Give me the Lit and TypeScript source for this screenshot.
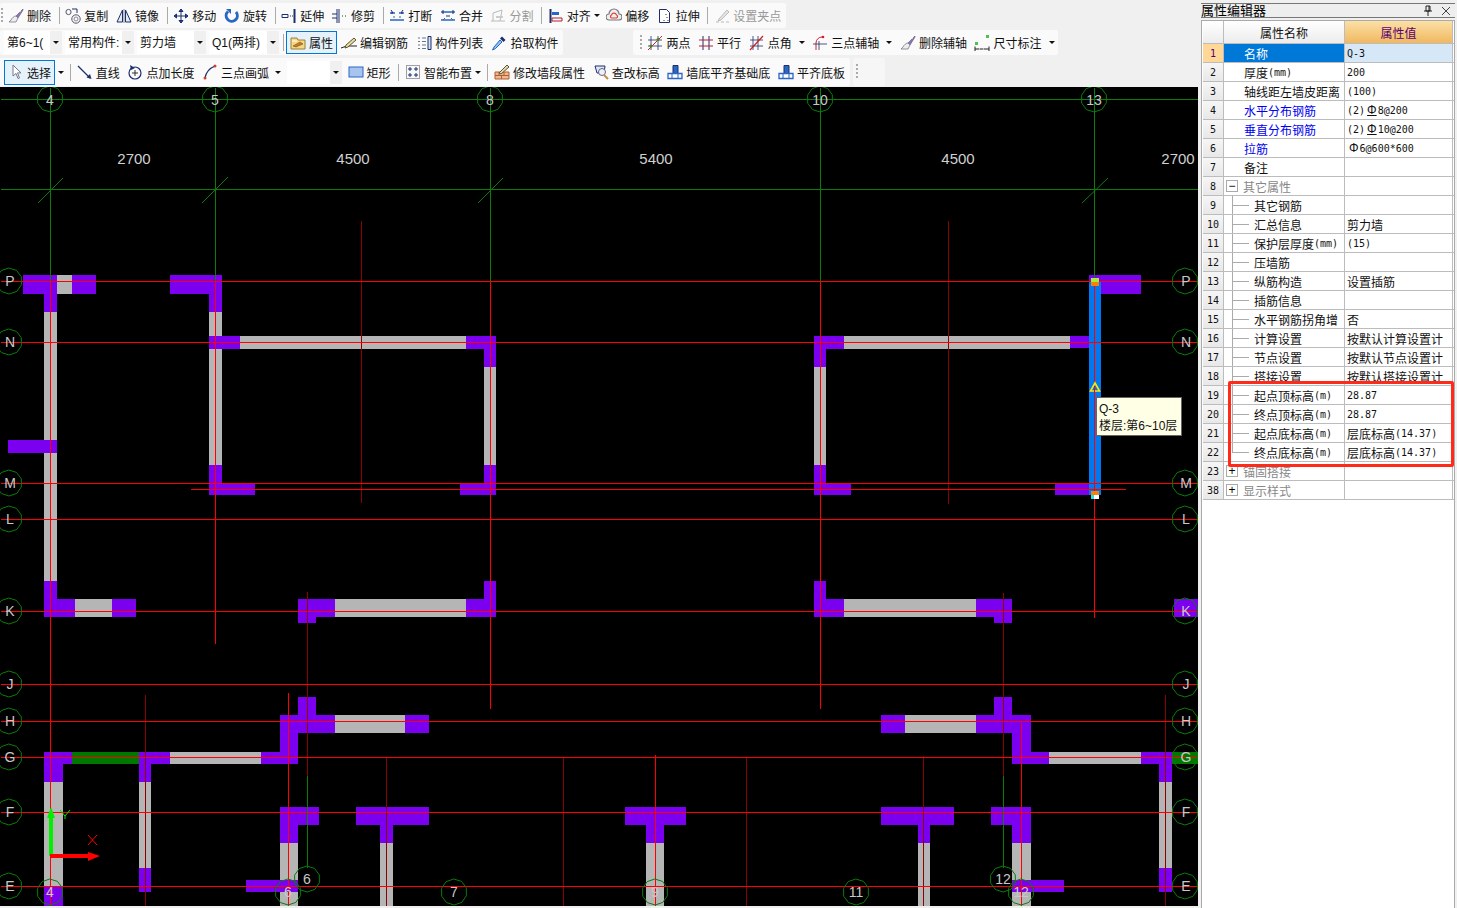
import { LitElement, html, css, svg } from "lit";
import { customElement } from "lit/decorators.js";

type Box = [number, number, number, number];
type Seg = [number, number, number, number, string];

const RED = "#ff0000";
const DARK = "#8c0000";
const AXIS = "#0a7d0a";

const PURPLE: Box[] = [
  [23, 275, 96, 294], [44, 294, 57, 312], [8, 440, 57, 453], [44, 581, 57, 599], [44, 599, 75, 617], [112, 599, 136, 617],
  [170, 275, 222, 294], [209, 294, 222, 312], [209, 336, 240, 349], [466, 336, 496, 349], [484, 349, 496, 367],
  [484, 465, 496, 484], [460, 484, 496, 495], [209, 465, 222, 484], [209, 484, 255, 495],
  [298, 599, 335, 617], [298, 617, 316, 623], [466, 599, 496, 617], [484, 581, 496, 599],
  [298, 697, 316, 715], [280, 715, 335, 733], [405, 715, 429, 733], [280, 733, 298, 752],
  [44, 752, 72, 764], [139, 752, 170, 764], [261, 752, 298, 764], [44, 764, 63, 782], [44, 886, 63, 906],
  [139, 764, 151, 782], [139, 868, 151, 892],
  [280, 807, 319, 825], [280, 825, 298, 843], [246, 880, 298, 892],
  [356, 807, 429, 825], [380, 825, 393, 843], [625, 807, 686, 825], [646, 825, 664, 843],
  [814, 599, 844, 617], [814, 581, 826, 599], [976, 599, 1012, 617], [994, 617, 1012, 623],
  [881, 715, 905, 733], [976, 715, 1031, 733], [994, 697, 1012, 715], [1012, 733, 1031, 752],
  [1012, 752, 1049, 764], [1141, 752, 1172, 764], [1159, 764, 1172, 782], [1159, 868, 1172, 892],
  [1174, 599, 1198, 617], [881, 807, 954, 825], [918, 825, 930, 843], [991, 807, 1031, 825], [1012, 825, 1031, 843],
  [1012, 880, 1064, 892],
  [814, 336, 844, 349], [814, 349, 826, 367], [814, 465, 826, 484], [814, 484, 851, 495],
  [1070, 336, 1090, 348], [1055, 484, 1090, 495], [1089, 275, 1141, 294],
];

const GRAY: Box[] = [
  [44, 312, 57, 581], [75, 599, 112, 617], [209, 312, 222, 465], [240, 336, 466, 349],
  [484, 367, 496, 465], [335, 599, 466, 617], [335, 715, 405, 733], [170, 752, 261, 764], [44, 782, 63, 886],
  [139, 782, 151, 868], [280, 843, 298, 906], [380, 843, 393, 906], [646, 843, 664, 906],
  [844, 599, 976, 617], [905, 715, 976, 733], [1049, 752, 1141, 764], [1159, 782, 1172, 868],
  [918, 843, 930, 906], [1012, 843, 1031, 906], [814, 367, 826, 465], [844, 336, 1070, 349],
];

// the grey patch in the top left wall sits on the purple run
const PATCH: Box[] = [[57, 275, 72, 294]];

const GREEN: Box[] = [[72, 752, 139, 764], [1172, 752, 1198, 764]];

const ROWS = [281, 342, 483, 519, 611, 684, 721, 757, 812, 886];

const LINES: Seg[] = [
  [0, 99, 1198, 99, AXIS], [0, 189, 1198, 189, AXIS],
  ...[50, 215, 490, 820, 1094].map((x) => [x, 87, x, 281, AXIS] as Seg),
  [38, 203, 63, 178, AXIS], [202, 203, 228, 177, AXIS], [478, 203, 503, 178, AXIS], [1082, 203, 1108, 178, AXIS],
  [307, 775, 307, 867, AXIS], [1003, 775, 1003, 867, AXIS],
  [361, 220, 361, 502, DARK], [948, 220, 948, 503, DARK], [307, 591, 307, 775, DARK], [1003, 592, 1003, 775, DARK],
  [145, 694, 145, 906, DARK], [386, 757, 386, 906, DARK], [563, 757, 563, 906, DARK], [746, 757, 746, 906, DARK],
  [923, 755, 923, 906, DARK], [1165, 694, 1165, 906, DARK],
  ...ROWS.map((y) => [0, y, 1198, y, RED] as Seg),
  [190, 489, 1125, 489, RED],
  [50, 281, 50, 906, RED], [215, 281, 215, 643, RED], [490, 281, 490, 708, RED], [820, 281, 820, 708, RED],
  [1094, 281, 1094, 617, RED], [288, 692, 288, 906, RED], [655, 754, 655, 906, RED], [1021, 722, 1021, 906, RED],
];

const LABELS: [number, number, string][] = [
  [50, 99, "4"], [215, 99, "5"], [490, 99, "8"], [820, 99, "10"], [1094, 99, "13"],
  ...["P", "N", "M", "L", "K", "J", "H", "G", "F", "E"].flatMap((t, i) => [
    [9, ROWS[i], t] as [number, number, string],
    [1185, ROWS[i], t] as [number, number, string],
  ]),
  [50, 892, "4"], [288, 892, "6"], [307, 879, "6"], [454, 892, "7"], [655, 892, "9"], [856, 892, "11"],
  [1003, 879, "12"], [1021, 892, "12"],
];

const SPANS: [number, string][] = [[134, "2700"], [353, "4500"], [656, "5400"], [958, "4500"], [1178, "2700"]];

const ring = (cx: number, cy: number) => {
  const pts: string[] = [];
  for (let i = 0; i < 10; i++) {
    const a = (Math.PI * 2 * i) / 10 + 0.3;
    pts.push(`${(cx + 13 * Math.cos(a)).toFixed(1)},${(cy + 13 * Math.sin(a)).toFixed(1)}`);
  }
  return pts.join(" ");
};

const rects = (list: Box[], fill: string) =>
  list.map(([a, b, c, d]) => svg`<rect x=${a} y=${b} width=${c - a} height=${d - b} fill=${fill}></rect>`);

@customElement("cad-canvas")
class CadCanvas extends LitElement {
  static styles = css`
    :host { display: block; position: relative; width: 1198px; height: 819px; background: #000; overflow: hidden; }
    svg { display: block; }
    .lab { font: 14px "Liberation Sans", sans-serif; fill: #c8c8c8; text-anchor: middle; dominant-baseline: central; }
    .span { font: 15px "Liberation Sans", sans-serif; fill: #d0d0d0; text-anchor: middle; dominant-baseline: central; }
    .tip {
      position: absolute; left: 1096px; top: 310px; width: 86px; height: 39px; box-sizing: border-box;
      background: #ffffe6; border: 1px solid #666; padding: 3px 0 0 2px; color: #111;
      font: 12px/17px "Liberation Sans", "Noto Sans CJK SC", sans-serif; white-space: nowrap;
    }
  `;

  render() {
    return html`
      <svg width="1198" height="819" viewBox="0 87 1198 819" shape-rendering="crispEdges">
        ${rects(GRAY, "#b5b5b5")} ${rects(PURPLE, "#7b00f0")} ${rects(PATCH, "#b5b5b5")} ${rects(GREEN, "#007800")}
        <rect x="1089" y="282" width="12" height="213" fill="#0078f0"></rect>
        ${LINES.map(([a, b, c, d, col]) => {
          const diag = a !== c && b !== d;
          const o = diag ? 0 : 0.5;
          return svg`<line x1=${a + o} y1=${b + o} x2=${c + o} y2=${d + o} stroke=${col} stroke-width="1" shape-rendering=${diag ? "auto" : "crispEdges"}></line>`;
        })}
        <rect x="1091" y="278" width="8" height="4" fill="#a0f040"></rect>
        <rect x="1091" y="282" width="8" height="4" fill="#ff8000"></rect>
        <rect x="1091" y="491" width="8" height="4" fill="#ff8000"></rect>
        <rect x="1091" y="495" width="8" height="4" fill="#fff"></rect>
        <rect x="1091" y="495" width="3" height="4" fill="#20e0f0"></rect>
        <polygon points="1095,383 1090.5,391 1099.5,391" fill="#0078f0" stroke="#ffe600" stroke-width="1.6" shape-rendering="auto"></polygon>
        <line x1="1094.5" y1="386" x2="1094.5" y2="392" stroke="#ff0000"></line>
        ${LABELS.map(([x, y]) => svg`<polygon points=${ring(x, y)} fill="none" stroke=${AXIS} shape-rendering="auto"></polygon>`)}
        <g shape-rendering="auto">
          ${LABELS.map(([x, y, t]) => {
            // side letters sit a pixel right of the ring centre, top numbers a pixel low
            const tx = x === 9 || x === 1185 ? x + 1 : x;
            const ty = y === 99 ? y + 1 : y;
            return svg`<text class="lab" x=${tx} y=${ty}>${t}</text>`;
          })}
          ${SPANS.map(([x, t]) => svg`<text class="span" x=${x} y="158">${t}</text>`)}
          <polygon points="49,856 49,818 47,818 51,807 55,818 53,818 53,856" fill="#00f000"></polygon>
          <polygon points="50,854 88,854 88,852 100,856 88,861 88,858 50,858" fill="#ff0000"></polygon>
          <path d="M60 810l5 6 5-6M65 816v3" fill="none" stroke="#00f000"></path>
          <path d="M88 835l9 10M97 835l-9 10" fill="none" stroke="#ff0000"></path>
        </g>
      </svg>
      <div class="tip">Q-3<br />楼层:第6~10层</div>
    `;
  }
}

const NAVY = "#1c2f6b";
const BLUE = "#2a66c4";
const ICONS: Record<string, unknown> = {
  brush: svg`<path d="M15 1L8 8l2 2 5-8z" fill="#8a78b8" stroke="#5a4a80" stroke-width=".6"/><path d="M8 8c-2 0-4 2-5 4l-2 2h7l2-4z" fill="#eee" stroke="#667" stroke-width=".7"/><path d="M12 3l1 1" stroke="#e8c040"/>`,
  copy: svg`<circle cx="3.5" cy="4" r="2.6" fill="none" stroke="#556"/><circle cx="11" cy="11" r="4.2" fill="none" stroke="#556"/><circle cx="11" cy="11" r="2" fill="none" stroke="#889"/><path d="M7 1h5v4" fill="none" stroke=${NAVY}/>`,
  mirror: svg`<path d="M6.5 2L1 14h5.500zM9.500 2L15 14H9.500z" fill="#e4ecf4" stroke=${NAVY}/><path d="M8 1v14" stroke="#888"/>`,
  move: svg`<path d="M8 1v14M1 8h14M8 1L6 3.500h4zM8 15l-2-2.500h4zM1 8l2.500-2v4zM15 8l-2.500-2v4z" fill=${BLUE} stroke=${NAVY}/>`,
  rotate: svg`<path d="M4 3.500A5.600 5.600 0 1 0 12 4" fill="none" stroke=${BLUE} stroke-width="3"/><path d="M2 1h5v5z" fill=${BLUE}/>`,
  extend: svg`<path d="M1 6.500h6v3H1z" fill="none" stroke=${NAVY}/><path d="M9 8h1M11 8h1" stroke="#333"/><path d="M13.500 1v14" stroke=${NAVY} stroke-width="2"/>`,
  trim: svg`<path d="M5 1v14M7 1v14" stroke=${NAVY}/><path d="M0 6h5M0 10h5" stroke=${NAVY}/><path d="M10 8h1M13 8h1" stroke="#333"/>`,
  breakup: svg`<path d="M1 5h5M10 5h5M1 12h14" stroke=${BLUE} stroke-width="1.600"/><path d="M2 2l2 3-2 0M14 2l-2 3 2 0" stroke=${NAVY} fill="none"/><path d="M4 9h2M10 9h2" stroke="#567"/>`,
  merge: svg`<path d="M1 4h14M1 12h14" stroke=${BLUE} stroke-width="1.600"/><path d="M3 2v4M13 2v4M6 8h4" stroke=${NAVY}/><path d="M5 10l-2 2M11 10l2 2" stroke="#567"/>`,
  split: svg`<path d="M1 13h14M3 5l9-3-2 11M3 5v8" fill="none" stroke="#bbb"/><path d="M6 9h7" stroke="#ccc" stroke-width="2"/>`,
  align: svg`<path d="M2.500 1v14" stroke=${NAVY} stroke-width="2"/><path d="M4 4h7v3H4z" fill=${BLUE}/><path d="M4 10h10v3H4z" fill="none" stroke="#b02030"/>`,
  offset: svg`<path d="M3 12a3 3 0 0 1 0-6 5 5 0 0 1 10 0 3 3 0 0 1 0 6z" fill="#eee" stroke="#778" stroke-width="1.200"/><path d="M5.500 10a1.600 1.600 0 0 1 0-3 2.600 2.600 0 0 1 5 0 1.600 1.600 0 0 1 0 3z" fill="none" stroke="#e04030" stroke-width="1.200"/>`,
  stretch: svg`<path d="M2.500 1.500h7l3 3v10h-10z" fill="#fff" stroke=${NAVY}/><path d="M9 6v1M10 9v1M11 12v1M7 12v1" stroke="#333"/>`,
  grip: svg`<path d="M2 14h3M7 14h3M12 14h3" stroke="#bbb"/><path d="M5 11l8-9 2 2-8 8-3 1z" fill="#e4e4e4" stroke="#bbb"/>`,
  folder: svg`<path d="M1 3h6l1 2h7v9H1z" fill="#f6d78a" stroke="#a08030"/><path d="M3 11l7-4 3 2-7 3z" fill="#c08020" stroke="#704010" stroke-width=".5"/><path d="M2 6h5" stroke="#fff"/>`,
  pen: svg`<path d="M0 13c3-1 5-2 8-2h8" fill="none" stroke="#222"/><path d="M5 10l8-7 2 2-8 7-3 1z" fill="#f0d890" stroke="#554"/>`,
  list: svg`<path d="M12 1.500h3v13h-3z" fill="#cfe0f4" stroke=${NAVY}/><path d="M2 3h2M6 3h4M2 6.500h2M6 6.500h4M2 10h2M6 10h4M2 13.500h2M6 13.500h4" stroke="#678"/>`,
  dropper: svg`<path d="M11 1.500l3.500 3.500-2 2-3.500-3.500z" fill=${NAVY}/><path d="M9 5l2 2-6.500 6.500-3 1.500 1.500-3z" fill="#8fc0f0" stroke=${BLUE}/>`,
  two: svg`<path d="M4 1v14M11 1v14M1 5h14M1 11h14" stroke=${NAVY} stroke-width=".8"/><path d="M1 15L15 1" stroke="#d02020"/><circle cx="4" cy="11" r="1.500" fill="#4a8020"/><circle cx="11" cy="4.500" r="1.500" fill="#4a8020"/>`,
  parallel: svg`<path d="M5 1v14M11 1v14" stroke=${NAVY}/><path d="M1 5h14M1 11h14" stroke="#c02030"/>`,
  angle: svg`<path d="M4 1v14M9 1v14M1 5h13M1 11h13" stroke=${NAVY} stroke-width=".8"/><path d="M1 15L14 1" stroke="#d02020" stroke-width="1.200"/>`,
  arcaxis: svg`<path d="M4 15V8a6 6 0 0 1 6-6" fill="none" stroke="#d02030"/><path d="M1 9h14M7 6v9" stroke=${NAVY} stroke-width=".8"/><circle cx="11" cy="2" r="1.300" fill="#d02030"/>`,
  dim: svg`<path d="M1 14h14M1 11.500v5M15 11.500v5" stroke="#222"/><rect x="1" y="7" width="3" height="3" fill="#50c050"/><rect x="12" y="0" width="3" height="3" fill="#50c050"/><path d="M5 14h1M9 14h1" stroke="#fff"/>`,
  cursor: svg`<path d="M4 1v11l3-2.500 2 5 1.500-.6-2-5H12z" fill="#fff" stroke="#778"/>`,
  line: svg`<path d="M1 2l12 12" stroke=${NAVY} stroke-width="1.300"/><path d="M14.500 15l-5-1.500 3.500-3.500z" fill=${NAVY}/>`,
  arclen: svg`<circle cx="8" cy="9" r="6" fill="none" stroke=${NAVY} stroke-width="1.200"/><path d="M8 6v6M5 9h6" stroke="#333"/><path d="M3 1l1 5 4-2z" fill=${NAVY}/>`,
  arc: svg`<path d="M3 14C4 8 8 4 13 2" fill="none" stroke=${NAVY} stroke-width="1.300"/><circle cx="3" cy="14" r="1.500" fill="#d04030"/><circle cx="13" cy="2" r="1.500" fill="#d04030"/>`,
  rect: svg`<rect x="1" y="3" width="14" height="10" fill="#a8c4ee" stroke=${BLUE}/>`,
  smart: svg`<rect x="1.500" y="1.500" width="13" height="13" fill="#f8f8f8" stroke="#445" stroke-dasharray="1 1"/><path d="M5 3v4M3 5h4M11 3v4M9 5h4M5 9v4M3 11h4M11 9v4M9 11h4" stroke=${NAVY}/>`,
  brick: svg`<path d="M1 8h14v7H1z" fill="#f0b890" stroke="#b06030"/><path d="M1 11.500h14M5 8v3.500M10 8v3.500M7.500 11.500V15" stroke="#b06030"/><path d="M5 9l8-8 2 2-8 7z" fill="#e8d8a0" stroke="#554"/>`,
  search: svg`<path d="M2 2h10l-1 7H4z" fill="#dce8f4" stroke=${NAVY}/><circle cx="9" cy="8" r="3.500" fill="#eef" stroke="#667"/><path d="M11 11l4 4" stroke="#c09040" stroke-width="2"/>`,
  tower: svg`<path d="M6 1.500h5v8H6z" fill=${BLUE} stroke=${NAVY}/><path d="M1 9.500h14v5H1z" fill="#fff" stroke=${BLUE} stroke-width="1.300"/><path d="M5 9.500v5M11 9.500v5" stroke=${BLUE}/>`,
};

// caret: gap before the little arrow, differs per button in the reference
type Tool = { i?: string; t?: string; caret?: 0 | 3 | 4; active?: boolean };
type Item = Tool | "sep" | "grip" | { sel: string; w: number };

const ROW1: Item[] = [
  "grip",
  { i: "brush", t: "删除" }, "sep", { i: "copy", t: "复制" }, { i: "mirror", t: "镜像" }, "sep",
  { i: "move", t: "移动" }, { i: "rotate", t: "旋转" }, "sep", { i: "extend", t: "延伸" }, { i: "trim", t: "修剪" }, "sep",
  { i: "breakup", t: "打断" }, { i: "merge", t: "合并" }, { i: "split", t: "分割" }, "sep",
  { i: "align", t: "对齐", caret: 0 }, { i: "offset", t: "偏移" }, { i: "stretch", t: "拉伸" }, "sep",
  { i: "grip", t: "设置夹点" },
];
const ROW2A: Item[] = [
  { sel: "第6~1(", w: 46 }, { sel: "常用构件:", w: 57 }, { sel: "剪力墙", w: 57 }, { sel: "Q1(两排)", w: 58 }, "sep",
  { i: "folder", t: "属性", active: true }, { i: "pen", t: "编辑钢筋" }, { i: "list", t: "构件列表" }, { i: "dropper", t: "拾取构件" },
];
const ROW2B: Item[] = [
  "grip",
  { i: "two", t: "两点" }, { i: "parallel", t: "平行" }, { i: "angle", t: "点角", caret: 4 },
  { i: "arcaxis", t: "三点辅轴", caret: 4 }, { i: "brush", t: "删除辅轴" }, { i: "dim", t: "尺寸标注", caret: 4 },
];
const ROW3: Item[] = [
  { i: "cursor", t: "选择", active: true, caret: 3 }, "sep",
  { i: "line", t: "直线" }, { i: "arclen", t: "点加长度" }, { i: "arc", t: "三点画弧", caret: 3 },
  { sel: "", w: 43 }, { i: "rect", t: "矩形" }, "sep", { i: "smart", t: "智能布置", caret: 0 }, "sep",
  { i: "brick", t: "修改墙段属性" }, { i: "search", t: "查改标高" }, { i: "tower", t: "墙底平齐基础底" }, { i: "tower", t: "平齐底板" },
];

type Prop = { n: string; name: string; val?: unknown; kind?: "link" | "group" | "tree" | "last"; open?: boolean };

const latin = (s: string) =>
  s.split(/([\x00-\x7f]+)/).map((p, i) => (i % 2 ? html`<span class="lat">${p}</span>` : p));

const PROPS: Prop[] = [
  { n: "2", name: "厚度(mm)", val: "200" },
  { n: "3", name: "轴线距左墙皮距离", val: "(100)" },
  { n: "4", name: "水平分布钢筋", val: html`<span class="lat">(2)<u class="rb">Φ</u>8@200</span>`, kind: "link" },
  { n: "5", name: "垂直分布钢筋", val: html`<span class="lat">(2)<u class="rb">Φ</u>10@200</span>`, kind: "link" },
  { n: "6", name: "拉筋", val: html`<span class="lat"><span class="rb">Φ</span>6@600*600</span>`, kind: "link" },
  { n: "7", name: "备注" },
  { n: "8", name: "其它属性", kind: "group", open: true },
  { n: "9", name: "其它钢筋", kind: "tree" },
  { n: "10", name: "汇总信息", val: "剪力墙", kind: "tree" },
  { n: "11", name: "保护层厚度(mm)", val: "(15)", kind: "tree" },
  { n: "12", name: "压墙筋", kind: "tree" },
  { n: "13", name: "纵筋构造", val: "设置插筋", kind: "tree" },
  { n: "14", name: "插筋信息", kind: "tree" },
  { n: "15", name: "水平钢筋拐角增", val: "否", kind: "tree" },
  { n: "16", name: "计算设置", val: "按默认计算设置计", kind: "tree" },
  { n: "17", name: "节点设置", val: "按默认节点设置计", kind: "tree" },
  { n: "18", name: "搭接设置", val: "按默认搭接设置计", kind: "tree" },
  { n: "19", name: "起点顶标高(m)", val: "28.87", kind: "tree" },
  { n: "20", name: "终点顶标高(m)", val: "28.87", kind: "tree" },
  { n: "21", name: "起点底标高(m)", val: "层底标高(14.37)", kind: "tree" },
  { n: "22", name: "终点底标高(m)", val: "层底标高(14.37)", kind: "last" },
  { n: "23", name: "锚固搭接", kind: "group" },
  { n: "38", name: "显示样式", kind: "group" },
];

@customElement("prop-panel")
class PropPanel extends LitElement {
  static styles = css`
    :host {
      display: block; position: relative; width: 259px; height: 908px; background: #f0f0f0; box-sizing: border-box;
      padding: 3px 2px 0 3px; font: 12px "Liberation Sans", "Noto Sans CJK SC", sans-serif; color: #111;
    }
    .title {
      height: 15px; box-sizing: border-box; border: 1px solid #777; border-width: 1px 0; background: #eee;
      display: flex; align-items: center; font-size: 13px; line-height: 13px; color: #000;
    }
    .title span { flex: 1; }
    .title svg { margin-right: 8px; display: block; }
    .title svg:last-child { margin-right: 4px; }
    .body { margin-top: 2px; height: 888px; box-sizing: border-box; background: #fff; border: 1px solid #aaa; border-bottom: 0; padding-left: 1px; }
    .row { display: grid; grid-template-columns: 21px 121px 108px; height: 19px; box-sizing: border-box; border-bottom: 1px solid #bcbcbc; }
    .row > div { border-right: 1px solid #bcbcbc; box-sizing: border-box; display: flex; align-items: center; white-space: nowrap; overflow: hidden; }
    .num { justify-content: center; background: linear-gradient(#f6f6f6, #e8e8e8); border-right-color: #ccc; }
    .lat { font: 10px "DejaVu Sans Mono", monospace; }
    .rb { font: 12px "Liberation Sans", sans-serif; margin: 0 1px 0 2px; }
    .head { height: 23px; }
    .head > div { justify-content: center; background: linear-gradient(#fff, #ececec); }
    .head .hv { background: linear-gradient(#fbe0a6, #f0b860); color: #5a0070; }
    .name { padding-left: 20px; }
    .val { padding-left: 2px; }
    .sel .num { background: #ffd898; color: #5a0070; }
    .sel .name { background: #0078d7; color: #fff; }
    .sel .val { background: #d6e8f7; }
    .link .name { color: #0000f0; }
    .group .name { padding-left: 2px; color: #888; }
    .tree .name, .last .name { padding-left: 8px; }
    .box {
      width: 12px; height: 12px; box-sizing: border-box; border: 1px solid #aaa; margin-right: 5px; flex: none;
      font: 12px/10px "Liberation Sans", sans-serif; color: #000; text-align: center; background: #fff;
    }
    .branch {
      width: 17px; height: 19px; margin-right: 5px; flex: none;
      background: linear-gradient(#aaa, #aaa) 0 0 / 1px 100% no-repeat, linear-gradient(#aaa, #aaa) 0 50% / 100% 1px no-repeat;
    }
    .last .branch { background-size: 1px 50%, 100% 1px; }
    .mark { position: absolute; left: 30px; top: 381px; width: 226px; height: 86px; box-sizing: border-box; border: 3px solid #ff2a1a; border-radius: 2px; }
  `;

  render() {
    return html`
      <div class="title">
        <span>属性编辑器</span>
        <svg width="10" height="11" viewBox="0 0 10 11"><path d="M3 1h4v5H3zM1 6h8M5 6v5M6 1v5" fill="none" stroke="#222"></path></svg>
        <svg width="10" height="10" viewBox="0 0 10 10"><path d="M1 1l8 8M9 1l-8 8" stroke="#444"></path></svg>
      </div>
      <div class="body">
        <div class="row head"><div></div><div>属性名称</div><div class="hv">属性值</div></div>
        <div class="row sel"><div class="num">${latin("1")}</div><div class="name">名称</div><div class="val">${latin("Q-3")}</div></div>
        ${PROPS.map(
          (p) => html`
            <div class="row ${p.kind ?? ""}">
              <div class="num">${latin(p.n)}</div>
              <div class="name">
                ${p.kind === "group" ? html`<span class="box">${p.open ? "−" : "+"}</span>` : ""}
                ${p.kind === "tree" || p.kind === "last" ? html`<span class="branch"></span>` : ""}
                ${latin(p.name)}
              </div>
              <div class="val">${typeof p.val === "string" ? latin(p.val) : p.val}</div>
            </div>
          `
        )}
      </div>
      <div class="mark"></div>
    `;
  }
}

@customElement("app-root")
class AppRoot extends LitElement {
  static styles = css`
    :host { display: block; width: 1457px; height: 908px; overflow: hidden; background: #f0f0f0; font: 12px "Liberation Sans", "Noto Sans CJK SC", sans-serif; color: #111; }
    .app { display: flex; height: 908px; }
    .left { width: 1198px; flex: none; }
    .bars { height: 87px; box-sizing: border-box; padding-top: 3px; display: flex; flex-direction: column; }
    .line { display: flex; height: 25px; margin-bottom: 2px; }
    .line.third { height: 28px; margin: 1px 0 0; }
    .strip { display: flex; align-items: center; background: #fafafa; border-radius: 2px; }
    .s2a, .s3 { padding-left: 4px; }
    .s2b { margin-left: 70px; padding-left: 6px; }
    .stub { margin-left: 3px; width: 30px; background: #f6f6f6; border-radius: 2px; padding-left: 2px; display: flex; align-items: center; }
    .tool { display: flex; align-items: center; gap: 3px; margin-right: 7.6px; white-space: nowrap; }
    .s2a .tool { margin-right: 8.2px; }
    .tool.tight { margin-right: 6.4px; }
    .tool:last-child, .s2a .tool:last-child { margin-right: 5px; }
    .s2b .tool:last-child { margin-right: 3px; }
    .tool svg { width: 16px; height: 16px; display: block; flex: none; }
    .tool.off { color: #999; }
    .s2a .tool.active { border: 1px solid #0078d7; background: #e5f1fb; height: 21px; padding: 0 3px; margin-right: 4px; }
    .third .tool.active { border: 1px solid #0078d7; background: #e5f1fb; height: 23px; margin-right: 0; padding: 0 3px 0 4px; gap: 2px; }
    .caret { width: 0; height: 0; border: 3px solid transparent; border-top: 3px solid #111; border-bottom: 0; flex: none; }
    .c0 { margin-left: 0; }
    .c3 { margin-left: 3px; }
    .c4 { margin-left: 4px; }
    .solo { margin-right: 6px; }
    .sep { width: 1px; height: 17px; background: #aaa; margin-right: 5.75px; flex: none; }
    .s2a .sep { margin: 0 2px 0 1px; }
    .dots { width: 2px; height: 16px; margin: 0 5px 0 1px; flex: none; background: repeating-linear-gradient(#aaa 0 2px, transparent 2px 4px); }
    .select { display: flex; height: 23px; margin-right: 3px; flex: none; }
    .s3 .select { margin: 0 6px 0 -2px; }
    .select .txt { background: #fff; padding-left: 3px; box-sizing: border-box; line-height: 25px; overflow: hidden; white-space: nowrap; }
    .select .btn { width: 12px; background: #f0f0f0; display: flex; align-items: center; justify-content: center; }
    .foot { height: 2px; background: #f0f0f0; }
  `;

  private item(it: Item) {
    if (it === "sep") return html`<div class="sep"></div>`;
    if (it === "grip") return html`<div class="dots"></div>`;
    if ("sel" in it) {
      return html`<div class="select">
        <div class="txt" style="width:${it.w}px">${it.sel}</div>
        <div class="btn"><div class="caret"></div></div>
      </div>`;
    }
    const off = it.t === "分割" || it.t === "设置夹点";
    const hasCaret = it.caret !== undefined;
    // a highlighted button keeps its arrow outside the blue frame
    if (it.active && hasCaret) {
      return html`<div class="tool active">
          <svg viewBox="0 0 16 16">${ICONS[it.i ?? ""]}</svg><span>${it.t}</span>
        </div>
        <div class="caret c${it.caret} solo"></div>`;
    }
    return html`<div class="tool ${it.active ? "active" : ""} ${off ? "off" : ""} ${it.caret === 0 ? "tight" : ""}">
      <svg viewBox="0 0 16 16">${ICONS[it.i ?? ""]}</svg><span>${it.t}</span>
      ${hasCaret ? html`<div class="caret c${it.caret}"></div>` : ""}
    </div>`;
  }

  render() {
    return html`
      <div class="app">
        <div class="left">
          <div class="bars">
            <div class="line"><div class="strip">${ROW1.map((i) => this.item(i))}</div></div>
            <div class="line">
              <div class="strip s2a">${ROW2A.map((i) => this.item(i))}</div>
              <div class="strip s2b">${ROW2B.map((i) => this.item(i))}</div>
            </div>
            <div class="line third">
              <div class="strip s3">${ROW3.map((i) => this.item(i))}</div>
              <div class="stub"><div class="dots"></div></div>
            </div>
          </div>
          <cad-canvas></cad-canvas>
          <div class="foot"></div>
        </div>
        <prop-panel></prop-panel>
      </div>
    `;
  }
}
